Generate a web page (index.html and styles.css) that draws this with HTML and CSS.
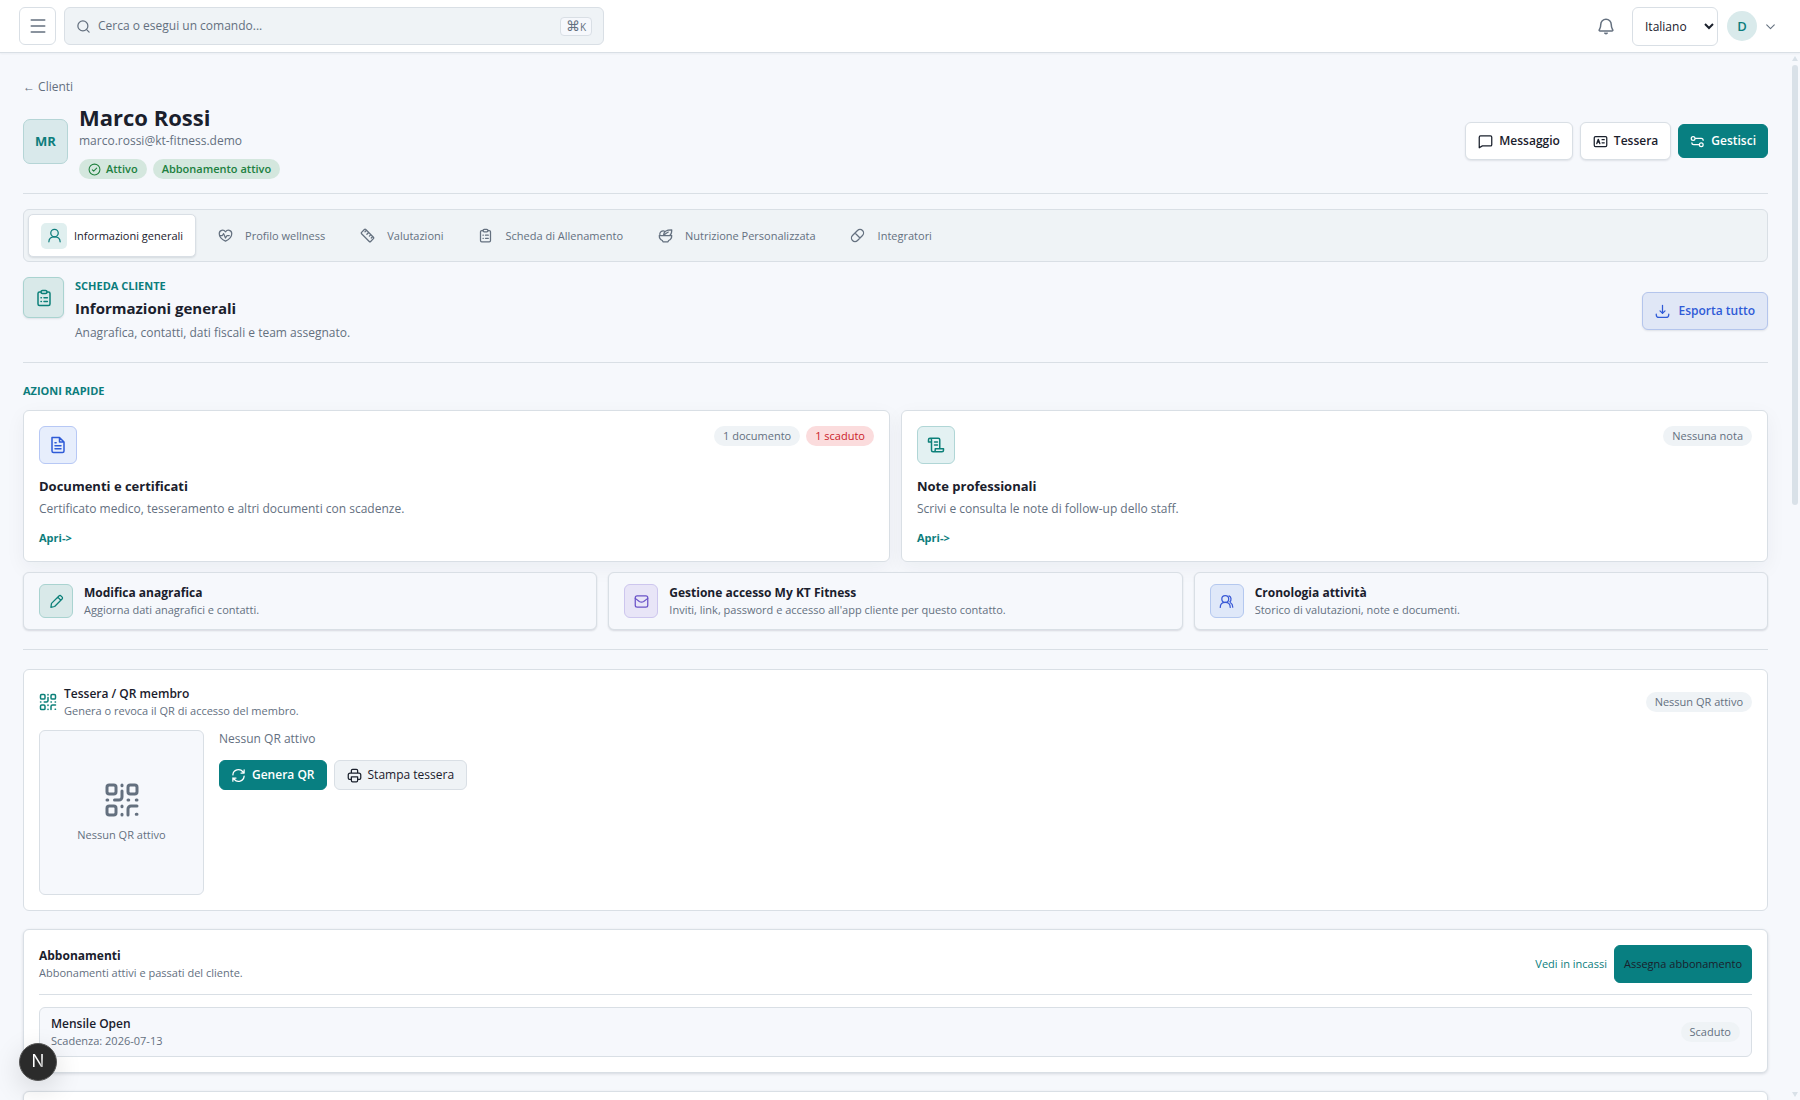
FILE: index.html
```html
<!DOCTYPE html>
<html lang="it">
<head>
  <meta charset="UTF-8" />
  <meta name="viewport" content="width=device-width, initial-scale=1.0"/>
  <title>Marco Rossi – KT Fitness</title>
  <link rel="stylesheet" href="styles.css">
</head>
<body>
  <svg class="sprite" aria-hidden="true">
    <symbol id="i-menu" viewBox="0 0 24 24"><path d="M3 4h18M3 12h18M3 20h18"/></symbol>
    <symbol id="i-search" viewBox="0 0 24 24"><circle cx="11" cy="11" r="8"/><path d="m17 17 4 4"/></symbol>
    <symbol id="i-bell" viewBox="0 0 24 24"><path d="M5 10a7 7 0 0 1 14 0c0 4 1 5 2 7 .4 1-.2 1.500-1 1.500H4c-.8 0-1.400-.5-1-1.500 1-2 2-3 2-7ZM10.500 21.500c.8.700 2.200.7 3 0"/></symbol>
    <symbol id="i-chevron" viewBox="0 0 24 24"><path d="m5 9 7 7 7-7"/></symbol>
    <symbol id="i-check" viewBox="0 0 24 24"><circle cx="12" cy="12" r="10"/><path d="m8 12.500 2.500 2.500L16 9.500"/></symbol>
    <symbol id="i-message" viewBox="0 0 24 24"><path d="M4 3h16a2 2 0 0 1 2 2v12a2 2 0 0 1-2 2H7l-5 3V5a2 2 0 0 1 2-2Z"/></symbol>
    <symbol id="i-card" viewBox="0 0 24 24"><rect x="2" y="4" width="20" height="16" rx="2"/><path d="m6 15.500 1-3 1.500-4 1.500 4 1 3M7 13h3M14.500 9H18M14.500 14H18"/></symbol>
    <symbol id="i-sliders" viewBox="0 0 24 24"><circle cx="5" cy="7" r="3"/><circle cx="18" cy="17" r="3"/><path d="M9 7h9a3 3 0 0 1 3 3M14 17H6a3 3 0 0 1-3-3"/></symbol>
    <symbol id="i-user" viewBox="0 0 24 24"><circle cx="12" cy="8" r="6"/><path d="M3 22c0-5 4-8 9-8s9 3 9 8"/></symbol>
    <symbol id="i-users" viewBox="0 0 24 24"><circle cx="10" cy="8" r="5.500"/><path d="M2 21.500c0-5 3.500-8 8-8s8 3 8 8M16 3c4 1.500 4 7 1.500 9.500M18.500 14c2.500 1.500 3.500 4 3.500 7"/></symbol>
    <symbol id="i-heart" viewBox="0 0 24 24"><path d="M12 21C9 19.500 2 15 2 9c0-6 7-7 10-3 3-4 10-3 10 3 0 6-7 10.500-10 12Z"/><path d="M2.500 12H7l2-3 3 7 2.500-4H18"/></symbol>
    <symbol id="i-ruler" viewBox="0 0 24 24"><path d="M2.500 7 7 2.500c.7-.7 1.500-.7 2.200 0L21.500 14.800c.7.700.7 1.500 0 2.200L17 21.500c-.7.700-1.500.7-2.200 0L2.500 9.200c-.7-.7-.7-1.500 0-2.200ZM10 4 8 6M13.500 7.500 11 10M17 11l-2 2M20 14l-2 2"/></symbol>
    <symbol id="i-clipboard" viewBox="0 0 24 24"><path d="M8 4H6a2 2 0 0 0-2 2v14a2 2 0 0 0 2 2h12a2 2 0 0 0 2-2V6a2 2 0 0 0-2-2h-2"/><rect x="8" y="2" width="8" height="4" rx="2"/><path d="M8 11.500h.5M12 11.500h4.500M8 16.500h.5M12 16.500h4.500"/></symbol>
    <symbol id="i-bowl" viewBox="0 0 24 24"><path d="M2 12h20c0 4-2 7-5 8l-1 2H8l-1-2c-3-1-5-4-5-8ZM3 11c-1-4 3-7 7-6M9 11c0-5 5-8 13-8 0 4-.5 7-3 8.500M9.500 11c2-1.500 4-3 7-4.500"/></symbol>
    <symbol id="i-pill" viewBox="0 0 24 24"><path d="M4 12 12 4a5.600 5.600 0 0 1 8 8l-8 8a5.600 5.600 0 0 1-8-8ZM8 8l8 8"/></symbol>
    <symbol id="i-download" viewBox="0 0 24 24"><path d="M12 2v13m-4-4 4 4 4-4M2 16v1c0 3 1.500 4.500 4.500 4.500h11c3 0 4.500-1.500 4.500-4.500v-1"/></symbol>
    <symbol id="i-file" viewBox="0 0 24 24"><path d="M4 2h10l6 6v12a2 2 0 0 1-2 2H6a2 2 0 0 1-2-2ZM14 2v6h6M8 9h1.500M8 13h8M8 17h8"/></symbol>
    <symbol id="i-scroll" viewBox="0 0 24 24"><path d="M17 17V5a2 2 0 0 0-2-2H4a2 2 0 0 1 2 2v14a2 2 0 0 0 2 2h12a2 2 0 0 0 2-2v-2H11v2a2 2 0 0 1-2 2M4 3a2 2 0 0 0-2 2v3h4M10 8h4M10 12h4"/></symbol>
    <symbol id="i-pencil" viewBox="0 0 24 24"><path d="m4 15 11.500-11.500c1.500-1.500 3-1.500 4 0l1 1c1.500 1 1.500 2.500 0 4L9 20l-6 1.500ZM14 5l5 5"/></symbol>
    <symbol id="i-mail" viewBox="0 0 24 24"><rect x="2" y="3" width="20" height="18" rx="3"/><path d="m2 7 6.500 5c2.500 1.500 4.500 1.500 7 0L22 7"/></symbol>
    <symbol id="i-qr" viewBox="0 0 24 24"><rect x="2" y="2" width="6" height="6" rx="1.500"/><rect x="16" y="2" width="6" height="6" rx="1.500"/><rect x="2" y="16" width="6" height="6" rx="1.500"/><path d="M12 2v.5M12 6v4a2 2 0 0 1-2 2H7M2 12h.5M16 12h.5M21.500 12h.5M12 16v.5M12 21.500v.5M16 22v-4a2 2 0 0 1 2-2h4M21.500 21.500h.5"/></symbol>
    <symbol id="i-refresh" viewBox="0 0 24 24"><path d="M3 11a9 9 0 0 1 16-5l2 2V3M21 8h-5M21 13a9 9 0 0 1-16 5l-2-2v5M3 16h5"/></symbol>
    <symbol id="i-printer" viewBox="0 0 24 24"><path d="M7 8V4a2 2 0 0 1 2-2h6a2 2 0 0 1 2 2v4M7 18H4a2 2 0 0 1-2-2v-5a3 3 0 0 1 3-3h14a3 3 0 0 1 3 3v5a2 2 0 0 1-2 2h-3M7 14h10v6a2 2 0 0 1-2 2H9a2 2 0 0 1-2-2Z"/></symbol>
  </svg>

  <header class="topbar">
    <button class="menu-btn" aria-label="Menu"><svg class="icon icon-lg"><use href="#i-menu"/></svg></button>
    <button class="search">
      <svg class="icon"><use href="#i-search"/></svg>
      <span>Cerca o esegui un comando...</span>
      <kbd>⌘<small>K</small></kbd>
    </button>
    <div class="topbar-right">
      <button class="bell" aria-label="Notifiche"><svg class="icon icon-lg"><use href="#i-bell"/></svg></button>
      <select class="lang" aria-label="Lingua">
        <option>Italiano</option>
        <option>English</option>
      </select>
      <button class="account" aria-label="Account">
        <span class="account-avatar">D</span>
        <svg class="icon icon-xs"><use href="#i-chevron"/></svg>
      </button>
    </div>
  </header>

  <div class="shell">
    <main class="content">
      <a class="back" href="#">← Clienti</a>

      <section class="profile">
        <div class="avatar">MR</div>
        <div class="profile-info">
          <h1>Marco Rossi</h1>
          <p class="email">marco.rossi@kt-fitness.demo</p>
          <div class="badges">
            <span class="badge badge-green"><svg class="icon icon-xs"><use href="#i-check"/></svg>Attivo</span>
            <span class="badge badge-green">Abbonamento attivo</span>
          </div>
        </div>
        <div class="actions">
          <button class="btn btn-outline"><svg class="icon"><use href="#i-message"/></svg>Messaggio</button>
          <button class="btn btn-outline"><svg class="icon"><use href="#i-card"/></svg>Tessera</button>
          <button class="btn btn-primary"><svg class="icon"><use href="#i-sliders"/></svg>Gestisci</button>
        </div>
      </section>

      <nav class="tabs">
        <a class="tab active" href="#"><span class="tab-icon"><svg class="icon"><use href="#i-user"/></svg></span>Informazioni generali</a>
        <a class="tab" href="#"><span class="tab-icon"><svg class="icon"><use href="#i-heart"/></svg></span>Profilo wellness</a>
        <a class="tab" href="#"><span class="tab-icon"><svg class="icon"><use href="#i-ruler"/></svg></span>Valutazioni</a>
        <a class="tab" href="#"><span class="tab-icon"><svg class="icon"><use href="#i-clipboard"/></svg></span>Scheda di Allenamento</a>
        <a class="tab" href="#"><span class="tab-icon"><svg class="icon"><use href="#i-bowl"/></svg></span>Nutrizione Personalizzata</a>
        <a class="tab" href="#"><span class="tab-icon"><svg class="icon"><use href="#i-pill"/></svg></span>Integratori</a>
      </nav>

      <section class="section-head">
        <div class="tile tile-teal tile-lg"><svg class="icon icon-lg"><use href="#i-clipboard"/></svg></div>
        <div class="section-text">
          <p class="eyebrow">SCHEDA CLIENTE</p>
          <h2>Informazioni generali</h2>
          <p class="section-desc">Anagrafica, contatti, dati fiscali e team assegnato.</p>
        </div>
        <button class="btn btn-export"><svg class="icon"><use href="#i-download"/></svg>Esporta tutto</button>
      </section>

      <section class="quick">
        <h3 class="eyebrow">AZIONI RAPIDE</h3>
        <div class="grid-2">
          <article class="card">
            <div class="card-top">
              <div class="tile tile-blue"><svg class="icon icon-lg"><use href="#i-file"/></svg></div>
              <div class="badges">
                <span class="badge">1 documento</span>
                <span class="badge badge-red">1 scaduto</span>
              </div>
            </div>
            <h4>Documenti e certificati</h4>
            <p class="card-desc">Certificato medico, tesseramento e altri documenti con scadenze.</p>
            <a class="card-link" href="#">Apri-&gt;</a>
          </article>
          <article class="card">
            <div class="card-top">
              <div class="tile tile-mint"><svg class="icon icon-lg"><use href="#i-scroll"/></svg></div>
              <div class="badges">
                <span class="badge">Nessuna nota</span>
              </div>
            </div>
            <h4>Note professionali</h4>
            <p class="card-desc">Scrivi e consulta le note di follow-up dello staff.</p>
            <a class="card-link" href="#">Apri-&gt;</a>
          </article>
        </div>
        <div class="grid-3">
          <a class="mini-card" href="#">
            <span class="tile tile-teal tile-sm"><svg class="icon"><use href="#i-pencil"/></svg></span>
            <span><strong>Modifica anagrafica</strong><small>Aggiorna dati anagrafici e contatti.</small></span>
          </a>
          <a class="mini-card" href="#">
            <span class="tile tile-violet tile-sm"><svg class="icon"><use href="#i-mail"/></svg></span>
            <span><strong>Gestione accesso My KT Fitness</strong><small>Inviti, link, password e accesso all'app cliente per questo contatto.</small></span>
          </a>
          <a class="mini-card" href="#">
            <span class="tile tile-indigo tile-sm"><svg class="icon"><use href="#i-users"/></svg></span>
            <span><strong>Cronologia attività</strong><small>Storico di valutazioni, note e documenti.</small></span>
          </a>
        </div>
      </section>

      <section class="panel">
        <div class="panel-head">
          <svg class="icon icon-lg qr-mark"><use href="#i-qr"/></svg>
          <div class="panel-title">
            <h3>Tessera / QR membro</h3>
            <p>Genera o revoca il QR di accesso del membro.</p>
          </div>
          <span class="badge">Nessun QR attivo</span>
        </div>
        <div class="qr-body">
          <div class="qr-box">
            <svg class="icon icon-xl"><use href="#i-qr"/></svg>
            <span>Nessun QR attivo</span>
          </div>
          <div>
            <p class="qr-status">Nessun QR attivo</p>
            <div class="qr-actions">
              <button class="btn btn-primary btn-sm"><svg class="icon"><use href="#i-refresh"/></svg>Genera QR</button>
              <button class="btn btn-soft btn-sm"><svg class="icon"><use href="#i-printer"/></svg>Stampa tessera</button>
            </div>
          </div>
        </div>
      </section>

      <section class="panel panel-raised">
        <div class="panel-head panel-head-line">
          <div class="panel-title">
            <h3 class="strong">Abbonamenti</h3>
            <p>Abbonamenti attivi e passati del cliente.</p>
          </div>
          <a class="text-link" href="#">Vedi in incassi</a>
          <button class="btn btn-assign">Assegna abbonamento</button>
        </div>
        <div class="plan">
          <div class="panel-title">
            <h3>Mensile Open</h3>
            <p>Scadenza: 2026-07-13</p>
          </div>
          <span class="badge">Scaduto</span>
        </div>
      </section>

      <section class="panel panel-raised panel-next"></section>
    </main>

    <div class="scrollbar" aria-hidden="true">
      <span class="arrow-up"></span>
      <div class="track"><div class="thumb"></div></div>
      <span class="arrow-down"></span>
    </div>
  </div>

  <button class="dev-badge" aria-label="Next.js Dev Tools"><span>N</span></button>
</body>
</html>
```
FILE: styles.css
```css
* {
  box-sizing: border-box;
}

body {
  margin: 0;
  height: 100vh;
  display: flex;
  flex-direction: column;
  overflow: hidden;
  font-family: "Open Sans", "Noto Sans", sans-serif;
  font-size: 12px;
  line-height: 18px;
  color: #1a202c;
  background: #f6f8fc;
}

h1, h2, h3, h4, p {
  margin: 0;
}

a {
  color: inherit;
  text-decoration: none;
}

button, select {
  font: inherit;
  color: inherit;
  cursor: pointer;
}

.sprite {
  position: absolute;
  width: 0;
  height: 0;
}

.icon {
  width: 15px;
  height: 15px;
  flex: none;
  fill: none;
  stroke: currentColor;
  stroke-width: 2;
  stroke-linecap: round;
  stroke-linejoin: round;
}

.icon-xs { width: 13px; height: 13px; }
.icon-lg { width: 18px; height: 18px; }
.icon-xl { width: 36px; height: 36px; }

/* top bar */
.topbar {
  flex: none;
  height: 53px;
  display: flex;
  align-items: center;
  gap: 8px;
  padding: 0 23px 0 19px;
  background: #fff;
  border-bottom: 1px solid #d9dfe5;
  box-shadow: 0 1px 2px rgba(20, 30, 50, 0.05);
}

.menu-btn {
  width: 37px;
  height: 38px;
  display: grid;
  place-items: center;
  padding: 0;
  border: 1px solid #d9dfe5;
  border-radius: 6px;
  background: #fff;
  color: #64707f;
}

.search {
  width: 540px;
  height: 38px;
  display: flex;
  align-items: center;
  gap: 7px;
  padding: 0 11px;
  border: 1px solid #d9dfe5;
  border-radius: 6px;
  background: #eff3f6;
  color: #64707f;
  text-align: left;
}

.search span {
  flex: 1;
}

.search kbd {
  padding: 0 5px;
  border: 1px solid #d9dfe5;
  border-radius: 4px;
  background: #f6f8fc;
  font: 14px/15px "Open Sans", "DejaVu Sans", sans-serif;
}

.search kbd small {
  font-size: 10px;
}

.topbar-right {
  margin-left: auto;
  display: flex;
  align-items: center;
  gap: 9px;
}

.bell, .account {
  display: flex;
  align-items: center;
  border: 0;
  background: none;
  color: #64707f;
}

.bell {
  padding: 8px;
}

.lang {
  width: 86px;
  height: 39px;
  padding: 0 0 0 8px;
  border: 1px solid #d9dfe5;
  border-radius: 6px;
  background: #fff;
}

.account {
  gap: 7px;
  padding: 0;
}

.account-avatar {
  width: 30px;
  height: 30px;
  display: grid;
  place-items: center;
  border-radius: 50%;
  background: #d9eaeb;
  color: #0c7d7c;
  font-size: 13px;
  font-weight: 600;
}

/* page */
.shell {
  flex: 1;
  min-height: 0;
  display: flex;
}

.content {
  flex: 1;
  min-width: 0;
  overflow: hidden;
  padding: 24px 23px 0;
}

.back {
  display: block;
  color: #64707f;
  line-height: 20px;
}

.profile {
  display: flex;
  align-items: center;
  gap: 11px;
  margin-top: 6px;
  padding-bottom: 14px;
  border-bottom: 1px solid #d9dfe5;
}

.avatar {
  width: 45px;
  height: 45px;
  display: grid;
  place-items: center;
  border: 1px solid #b5d5d6;
  border-radius: 7px;
  background: #d9e9eb;
  color: #0c7d7c;
  font-size: 13px;
  font-weight: 700;
}

.profile-info {
  flex: 1;
}

.profile h1 {
  font-size: 22px;
  line-height: 28px;
  font-weight: 700;
}

.email {
  color: #64707f;
  line-height: 20px;
}

.badges {
  display: flex;
  gap: 6px;
}

.profile .badges {
  margin-top: 8px;
}

.badge {
  height: 20px;
  display: inline-flex;
  align-items: center;
  gap: 5px;
  padding: 0 9px;
  border-radius: 10px;
  background: #eff3f6;
  color: #64707f;
  font-size: 11px;
  font-weight: 500;
}

.badge-green {
  background: #d4e7de;
  color: #20803f;
  font-weight: 600;
}

.badge-red {
  background: #fbdcdd;
  color: #cb2229;
}

.actions {
  display: flex;
  align-items: center;
  gap: 7px;
}

.btn {
  height: 38px;
  display: inline-flex;
  align-items: center;
  gap: 6px;
  padding: 0 12px;
  border: 1px solid #d9dfe5;
  border-radius: 6px;
  font-weight: 600;
  white-space: nowrap;
}

.btn-outline {
  background: #fff;
  box-shadow: 0 1px 2px rgba(20, 30, 50, 0.1);
}

.btn-primary {
  height: 34px;
  padding: 0 11px;
  border-color: #087f81;
  background: #087f81;
  color: #fff;
}

.btn-export {
  gap: 8px;
  border-color: #b4c5ec;
  background: #e0e7f6;
  color: #2f5bd7;
  box-shadow: 0 1px 2px rgba(20, 30, 50, 0.1);
}

.btn-soft {
  background: #eff3f6;
  font-weight: 400;
}

.btn-sm {
  height: 30px;
}

.btn-assign {
  padding: 0 9px;
  border-color: #087f81;
  background: #087f81;
  font-size: 11px;
  font-weight: 500;
}

/* tabs */
.tabs {
  display: flex;
  gap: 3px;
  margin-top: 15px;
  padding: 4px;
  border: 1px solid #d9dfe5;
  border-radius: 6px;
  background: #eff3f6;
}

.tab {
  height: 43px;
  display: flex;
  align-items: center;
  gap: 7px;
  padding: 0 12px;
  border: 1px solid transparent;
  border-radius: 5px;
  color: #64707f;
  font-size: 11px;
  font-weight: 500;
}

.tab.active {
  border-color: #d9dfe5;
  background: #fff;
  color: #1a202c;
  box-shadow: 0 1px 2px rgba(20, 30, 50, 0.12);
}

.tab-icon {
  width: 26px;
  height: 26px;
  display: grid;
  place-items: center;
  border-radius: 5px;
}

.active .tab-icon {
  background: #e0efef;
  color: #0c7d7c;
}

/* section heading */
.section-head {
  display: flex;
  align-items: center;
  gap: 11px;
  margin-top: 15px;
  padding-bottom: 17px;
  border-bottom: 1px solid #d9dfe5;
}

.section-text {
  flex: 1;
}

.eyebrow {
  color: #0c7d7c;
  font-size: 11px;
  font-weight: 700;
}

.section-head h2 {
  font-size: 15px;
  line-height: 26px;
  font-weight: 700;
}

.section-desc {
  color: #64707f;
  line-height: 24px;
}

.tile {
  width: 38px;
  height: 38px;
  flex: none;
  display: grid;
  place-items: center;
  border: 1px solid #b5d5d6;
  border-radius: 6px;
}

.tile-lg {
  width: 41px;
  height: 41px;
  align-self: flex-start;
  box-shadow: 0 1px 2px rgba(20, 30, 50, 0.1);
}

.tile-sm {
  width: 34px;
  height: 34px;
}

.tile-teal { background: #d9e9e9; border-color: #a9d3d0; color: #0c8079; }
.tile-mint { background: #e3f1f2; border-color: #b0d6d6; color: #0c8079; }
.tile-blue { background: #e7eefc; border-color: #b7c8f5; color: #2f5bd7; }
.tile-violet { background: #e8e5f7; border-color: #cdc6ee; color: #6a53c8; }
.tile-indigo { background: #dfe8f9; border-color: #b4c8ef; color: #3a5ad6; }

/* quick actions */
.quick {
  padding: 20px 0 19px;
  border-bottom: 1px solid #d9dfe5;
}

.quick .eyebrow {
  line-height: 16px;
}

.grid-2, .grid-3 {
  display: grid;
  gap: 11px;
  margin-top: 11px;
}

.grid-2 {
  grid-template-columns: repeat(2, 1fr);
}

.grid-3 {
  grid-template-columns: repeat(3, 1fr);
  margin-top: 10px;
}

.card {
  padding: 15px;
  border: 1px solid #d9dfe5;
  border-radius: 6px;
  background: #fff;
  box-shadow: 0 6px 20px rgba(20, 40, 60, 0.05);
}

.card-top {
  display: flex;
  justify-content: space-between;
  align-items: flex-start;
}

.card h4 {
  margin-top: 12px;
  font-size: 13px;
  line-height: 20px;
  font-weight: 700;
}

.card-desc {
  color: #64707f;
  line-height: 26px;
}

.card-link {
  display: block;
  margin-top: 8px;
  color: #0c7d7c;
  font-size: 11px;
  line-height: 16px;
  font-weight: 700;
}

.mini-card {
  display: flex;
  align-items: center;
  gap: 11px;
  padding: 11px 15px;
  border: 1px solid #d9dfe5;
  border-radius: 6px;
  background: #f6f8fc;
  box-shadow: 0 1px 2px rgba(20, 30, 50, 0.14);
}

.mini-card strong, .mini-card small {
  display: block;
}

.mini-card strong {
  font-size: 12px;
  font-weight: 700;
}

.mini-card small {
  color: #64707f;
  font-size: 11px;
  line-height: 16px;
}

/* panels */
.panel {
  margin-top: 18px;
  padding: 15px;
  border: 1px solid #d9dfe5;
  border-radius: 6px;
  background: #fff;
}

.quick + .panel {
  margin-top: 19px;
}

.panel-raised {
  box-shadow: 0 1px 3px rgba(20, 30, 50, 0.14);
}

.panel-next {
  height: 80px;
}

.panel-head {
  display: flex;
  align-items: center;
  gap: 7px;
}

.panel-head-line {
  padding-bottom: 11px;
  border-bottom: 1px solid #d9dfe5;
}

.qr-mark {
  color: #0c8079;
}

.panel-title {
  flex: 1;
}

.panel-title h3 {
  font-size: 12px;
  font-weight: 600;
}

.panel-title h3.strong {
  font-weight: 700;
}

.panel-title p {
  color: #64707f;
  font-size: 11px;
  line-height: 16px;
}

.qr-body {
  display: flex;
  gap: 15px;
  margin-top: 11px;
}

.qr-box {
  width: 165px;
  height: 165px;
  display: flex;
  flex-direction: column;
  align-items: center;
  justify-content: center;
  gap: 8px;
  border: 1px solid #d9dfe5;
  border-radius: 6px;
  background: #f6f8fc;
  color: #64707f;
  font-size: 11px;
}

.qr-status {
  color: #64707f;
}

.qr-actions {
  display: flex;
  gap: 7px;
  margin-top: 12px;
}

.text-link {
  color: #0c7d7c;
  font-size: 11px;
  font-weight: 500;
}

.plan {
  display: flex;
  align-items: center;
  margin-top: 12px;
  padding: 7px 11px;
  border: 1px solid #d9dfe5;
  border-radius: 6px;
  background: #f6f8fc;
}

/* scroll indicator */
.scrollbar {
  width: 9px;
  display: flex;
  flex-direction: column;
  align-items: center;
  gap: 4px;
  padding: 3px 1px 3px 0;
}

.track {
  flex: 1;
  width: 6px;
}

.thumb {
  height: 43%;
  border-radius: 3px;
  background: #d9e1e8;
}

.arrow-up, .arrow-down {
  border: 3px solid transparent;
}

.arrow-up {
  border-top: 0;
  border-bottom: 5px solid #d9e1e8;
}

.arrow-down {
  border-bottom: 0;
  border-top: 5px solid #d9e1e8;
}

.dev-badge {
  position: fixed;
  left: 19px;
  bottom: 19px;
  width: 38px;
  height: 38px;
  padding: 0;
  border: 1px solid #555;
  border-radius: 50%;
  background: #2b2b2b;
  box-shadow: 0 8px 28px rgba(0, 0, 0, 0.14);
}

.dev-badge span {
  font-family: Inter, sans-serif;
  font-size: 17px;
  background: linear-gradient(120deg, #fff 60%, #777);
  background-clip: text;
  color: transparent;
}
```
